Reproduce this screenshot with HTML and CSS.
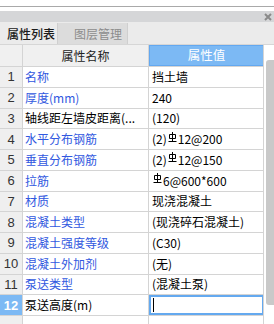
FILE: index.html
```html
<!DOCTYPE html>
<html>
<head>
<meta charset="utf-8">
<link rel="stylesheet" href="styles.css">
</head>
<body>
<div class="panel">
  <div class="topgap"></div>
  <div class="titlebar">
    <svg class="close" width="8" height="8" viewBox="0 0 8 8"><path d="M1 1L7 7M7 1L1 7" stroke="#8a8a8a" stroke-width="2"/></svg>
  </div>
  <div class="tabs">
    <div class="tab active">属性列表</div>
    <div class="tab">图层管理</div>
  </div>
  <div class="body">
    <div class="grid">
      <div class="c num hd"></div>
      <div class="c name hd center">属性名称</div>
      <div class="c val hdblue center">属性值</div>

      <div class="c num">1</div><div class="c name blue">名称</div><div class="c val">挡土墙</div>
      <div class="c num">2</div><div class="c name blue">厚度(mm)</div><div class="c val">240</div>
      <div class="c num">3</div><div class="c name">轴线距左墙皮距离(...</div><div class="c val">(120)</div>
      <div class="c num">4</div><div class="c name blue">水平分布钢筋</div><div class="c val">(2)<svg class="bar" width="9" height="11" viewBox="0 0 9 11"><path d="M1.5 2.5H7.5V6.5H1.5Z M4.5 0V9 M0.5 9.5H8.5" fill="none" stroke="#000" stroke-width="1"/></svg>12@200</div>
      <div class="c num">5</div><div class="c name blue">垂直分布钢筋</div><div class="c val">(2)<svg class="bar" width="9" height="11" viewBox="0 0 9 11"><path d="M1.5 2.5H7.5V6.5H1.5Z M4.5 0V9 M0.5 9.5H8.5" fill="none" stroke="#000" stroke-width="1"/></svg>12@150</div>
      <div class="c num">6</div><div class="c name blue">拉筋</div><div class="c val"><svg class="bar" width="9" height="11" viewBox="0 0 9 11"><path d="M1.5 2.5H7.5V6.5H1.5Z M4.5 0V9 M0.5 9.5H8.5" fill="none" stroke="#000" stroke-width="1"/></svg>6@600*600</div>
      <div class="c num">7</div><div class="c name blue">材质</div><div class="c val">现浇混凝土</div>
      <div class="c num">8</div><div class="c name blue">混凝土类型</div><div class="c val">(现浇碎石混凝土)</div>
      <div class="c num">9</div><div class="c name blue">混凝土强度等级</div><div class="c val">(C30)</div>
      <div class="c num">10</div><div class="c name blue">混凝土外加剂</div><div class="c val">(无)</div>
      <div class="c num">11</div><div class="c name blue">泵送类型</div><div class="c val">(混凝土泵)</div>
      <div class="c num sel">12</div><div class="c name">泵送高度(m)</div><div class="c val edit"><span class="caret"></span></div>
      <div class="c num"></div><div class="c name"></div><div class="c val"></div>
    </div>
    <div class="scroll"><div class="thumb"></div></div>
  </div>
</div>
</body>
</html>
```

FILE: styles.css
```css
html, body {
  margin: 0;
  padding: 0;
  background: #fff;
}
.panel {
  width: 274px;
  height: 324px;
  overflow: hidden;
  font-family: "Noto Sans CJK SC", "Liberation Sans", sans-serif;
  font-size: 12px;
  color: #000;
}
.topgap {
  height: 6px;
  border-bottom: 1px solid #a9a9a9;
  margin-bottom: 4px;
}
.titlebar {
  height: 11px;
  background: #d5d6d8;
  display: flex;
  justify-content: flex-end;
  align-items: center;
  padding-right: 2px;
}
.tabs {
  height: 22px;
  background: #ebebeb;
  display: flex;
  align-items: stretch;
  border-bottom: 1px solid #d6d6d6;
}
.tab {
  width: 71px;
  box-sizing: border-box;
  display: flex;
  align-items: center;
  padding-left: 16px;
  color: #8c8c8c;
  background: #dcdcdc;
  border-left: 1px solid #cfcfcf;
  border-right: 1px solid #cfcfcf;
  margin-top: 1px;
  font-size: 12px;
}
.tab.active {
  width: 57px;
  padding-left: 7px;
  color: #1a1a1a;
  background: #ebebeb;
  border: none;
  font-weight: 500;
  margin-top: 0;
}
.body {
  display: flex;
  height: 280px;
}
.grid {
  width: 264px;
  display: grid;
  grid-template-columns: 22px 125px 115px;
  grid-template-rows: 21px repeat(13, 19.75px);
  gap: 1px;
  background: #d4d4d4;
  border-right: 1px solid #d4d4d4;
  box-sizing: border-box;
  align-content: start;
  overflow: hidden;
}
.c {
  background: #fff;
  display: flex;
  align-items: center;
  white-space: nowrap;
  overflow: hidden;
  line-height: 1;
}
.num {
  background: #efefef;
  justify-content: center;
  color: #333;
  font-family: "Liberation Sans", sans-serif;
  font-size: 13px;
}
.name {
  padding-left: 2px;
}
.val {
  padding-left: 3px;
}
.hd {
  background: #f0f0f0;
  color: #222;
}
.center {
  justify-content: center;
  padding-left: 0;
}
.hdblue {
  background: #7cb9f4;
  color: #fff;
  font-size: 12.5px;
  box-shadow: inset 0 0 0 1px #63a8f0;
}
.blue {
  color: #3158e0;
}
.sel {
  background: #7cb9f4;
  color: #fff;
  font-weight: 700;
}
.edit {
  box-shadow: inset 0 0 0 2px #64a9ef;
}
.caret {
  width: 1px;
  height: 14px;
  background: #000;
  margin-left: 1px;
}
.bar {
  margin: 0 1px 0 1px;
  position: relative;
  top: -2px;
}
.scroll {
  width: 10px;
  position: relative;
}
.thumb {
  position: absolute;
  left: 2px;
  right: 0;
  top: 15px;
  height: 245px;
  background: #c9c9c9;
  border-radius: 3px 0 0 3px;
}
```
